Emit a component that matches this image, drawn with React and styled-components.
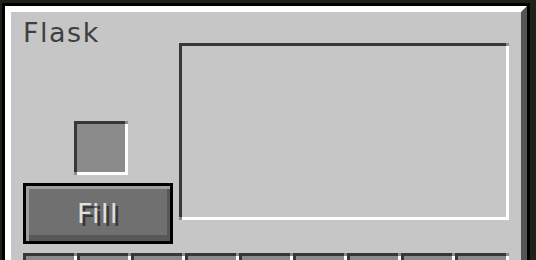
import styled, { createGlobalStyle } from 'styled-components';

/* minecraft-ish gui, everything is 3 screen px per gui px */
const GlobalStyle = createGlobalStyle`
 html, body {
  margin: 0;
  height: 260px;
  overflow: hidden;
  background: #1e2317;
  font-family: 'DejaVu Sans', 'Liberation Sans', sans-serif;
 }
`;

const Page = styled.div`
 padding: 3px 0 0 2px;
`;

const Window = styled.div`
 width: 528px;
 box-sizing: border-box;
 border: 3px solid #000;
`;

const Frame = styled.div`
 background: #c6c6c6;
 border-style: solid;
 border-width: 6px;
 border-color: #fff #555 #555 #fff;
`;

const Content = styled.div`
 padding: 0 12px 12px;
`;

const Top = styled.div`
 display: flex;
 gap: 6px;
 height: 232px;
`;

const LeftCol = styled.div`
 width: 150px;
 display: flex;
 flex-direction: column;
`;

const Title = styled.h1`
 margin: 7px 0 0;
 font-size: 27px;
 line-height: 27px;
 font-weight: 400;
 letter-spacing: 1.5px;
 color: #404040;
`;

const Slot = styled.div`
 position: relative;
 box-sizing: border-box;
 width: ${({ $w }) => $w || 54}px;
 height: ${({ $h }) => $h || 54}px;
 flex-shrink: 0;
 background: ${({ $bg }) => $bg || '#8b8b8b'};
 border: 3px solid;
 border-color: #373737 #fff #fff #373737;

 &::before,
 &::after {
  content: '';
  position: absolute;
  width: 3px;
  height: 3px;
  background: #8b8b8b;
 }
 &::before {
  top: -3px;
  right: -3px;
 }
 &::after {
  bottom: -3px;
  left: -3px;
 }
`;

const SmallSlot = styled(Slot)`
 margin: 75px 0 0 51px;
`;

const Tank = styled(Slot)`
 margin-top: 31px;
`;

const Button = styled.button`
 margin-top: auto;
 height: 61px;
 width: 150px;
 box-sizing: border-box;
 border: 3px solid #000;
 padding: 0;
 background: #707070;
 box-shadow: inset 3px 3px 0 #9e9e9e, inset -3px -6px 0 #585858;
 display: flex;
 align-items: center;
 justify-content: center;
 font-family: inherit;
 font-size: 27px;
 line-height: 27px;
 letter-spacing: 1.5px;
 color: #e0e0e0;
 text-shadow: 3px 3px 0 #383838;
 cursor: pointer;
`;

const Row = styled.div`
 display: flex;
 margin-top: 9px;
`;

const App = () => {
 return (
  <Page>
   <GlobalStyle />
   <Window>
    <Frame>
     <Content>
      <Top>
       <LeftCol>
        <Title>Flask</Title>
        <SmallSlot />
        <Button>Fill</Button>
       </LeftCol>
       <Tank $w={330} $h={177} $bg='#c6c6c6' />
      </Top>
      <Row>
       {Array.from({ length: 9 }).map((_, i) => (
        <Slot key={i} />
       ))}
      </Row>
     </Content>
    </Frame>
   </Window>
  </Page>
 );
};

export default App;
